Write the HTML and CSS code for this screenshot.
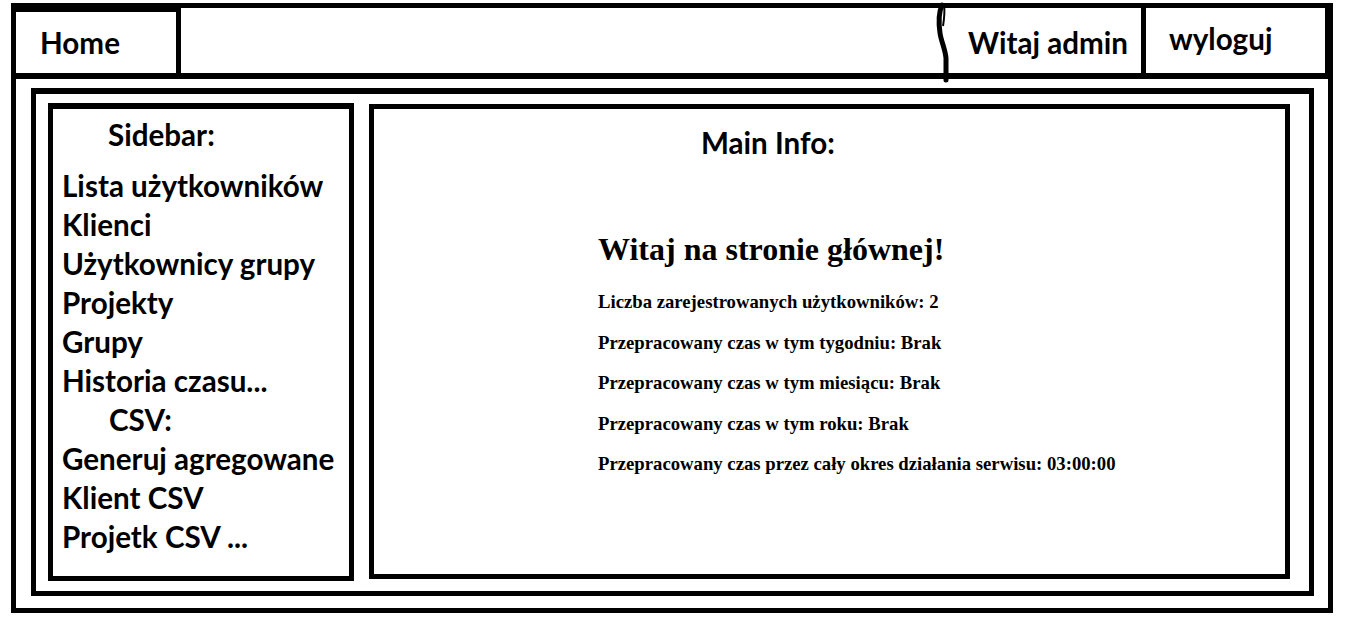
FILE: index.html
```html
<!DOCTYPE html>
<html lang="pl">
<head>
<meta charset="utf-8">
<title>Wireframe</title>
<link rel="stylesheet" href="styles.css">
</head>
<body>
<div class="frame">
  <header class="topbar">
    <div class="cell cell-home">Home</div>
    <div class="cell cell-fill"></div>
    <div class="squiggle">
      <svg width="14" height="65" viewBox="0 0 14 65" aria-hidden="true">
        <path d="M6 -3 C2 6, 3 18, 4 25 C5 33, 9 40, 10 50 L10 72" fill="none" stroke="#000" stroke-width="5" stroke-linecap="round"/>
        <path d="M8 -3 C9 4, 8 12, 7 18" fill="none" stroke="#000" stroke-width="2"/>
      </svg>
    </div>
    <div class="cell cell-user">Witaj admin</div>
    <div class="cell cell-logout">wyloguj</div>
  </header>
  <div class="inner">
    <aside class="sidebar">
      <div class="sb-title">Sidebar:</div>
      <ul class="sb-list">
        <li>Lista użytkowników</li>
        <li>Klienci</li>
        <li>Użytkownicy grupy</li>
        <li>Projekty</li>
        <li>Grupy</li>
        <li>Historia czasu...</li>
        <li class="sb-sub">CSV:</li>
        <li>Generuj agregowane</li>
        <li>Klient CSV</li>
        <li>Projetk CSV ...</li>
      </ul>
    </aside>
    <main class="main">
      <div class="main-title">Main Info:</div>
      <div class="content">
        <h1 class="welcome">Witaj na stronie głównej!</h1>
        <p class="stat">Liczba zarejestrowanych użytkowników: 2</p>
        <p class="stat">Przepracowany czas w tym tygodniu: Brak</p>
        <p class="stat">Przepracowany czas w tym miesiącu: Brak</p>
        <p class="stat">Przepracowany czas w tym roku: Brak</p>
        <p class="stat">Przepracowany czas przez cały okres działania serwisu: 03:00:00</p>
      </div>
    </main>
  </div>
</div>
</body>
</html>
```
FILE: styles.css
```css
* { box-sizing: border-box; }
html, body { margin: 0; padding: 0; background: #fff; }
body { color: #000; font-family: Lato, "Open Sans", sans-serif; }

.frame {
  margin: 3px 0 0 11px;
  width: 1322px;
  height: 610px;
  border: 5px solid #000;
  display: flex;
  flex-direction: column;
}

.topbar {
  display: flex;
  height: 71px;
  border-bottom: 6px solid #000;
  flex: none;
}
.cell {
  font-weight: 700;
  font-size: 29.6px;
  line-height: 39px;
  white-space: nowrap;
}
.cell-home {
  width: 165px;
  border-top: 4px solid #000;
  border-right: 5px solid #000;
  padding: 11px 0 0 24px;
}
.cell-fill { flex: 1; }
.squiggle { width: 14px; flex: none; }
.squiggle svg { display: block; overflow: visible; }
.cell-user {
  width: 196px;
  border-right: 5px solid #000;
  padding: 15px 0 0 18px;
}
.cell-logout {
  width: 182px;
  border-right: 3px solid #000;
  padding: 11px 0 0 23px;
}

.inner {
  flex: 1;
  margin: 9px 14px 12px 15px;
  border: 5px solid #000;
  border-top-width: 6px;
  display: flex;
  gap: 15px;
  padding: 9px 19px 10px 12px;
}

.sidebar {
  width: 306px;
  flex: none;
  border: 5px solid #000;
  border-top-width: 6px;
  padding: 6px 0 0 9px;
  font-weight: 700;
  font-size: 29.6px;
  line-height: 39px;
}
.sb-title { padding-left: 46px; margin-bottom: 12px; }
.sb-list { list-style: none; margin: 0; padding: 0; }
.sb-list li { white-space: nowrap; }
.sb-list .sb-sub { padding-left: 47px; }

.main {
  flex: 1;
  margin: 1px 0 2px;
  border: 5px solid #000;
  padding: 14px 0 0 327px;
}
.main-title {
  font-weight: 700;
  font-size: 29.6px;
  line-height: 39px;
}
.content {
  margin-left: -103px;
  font-family: "Liberation Serif", "Times New Roman", serif;
}
.welcome {
  margin: 69px 0 0;
  font-size: 32px;
  line-height: 37px;
  font-weight: 700;
}
.stat {
  margin: 19.6px 0 0;
  font-size: 18.72px;
  line-height: 21px;
  font-weight: 700;
}
.welcome + .stat { margin-top: 23px; }
```
